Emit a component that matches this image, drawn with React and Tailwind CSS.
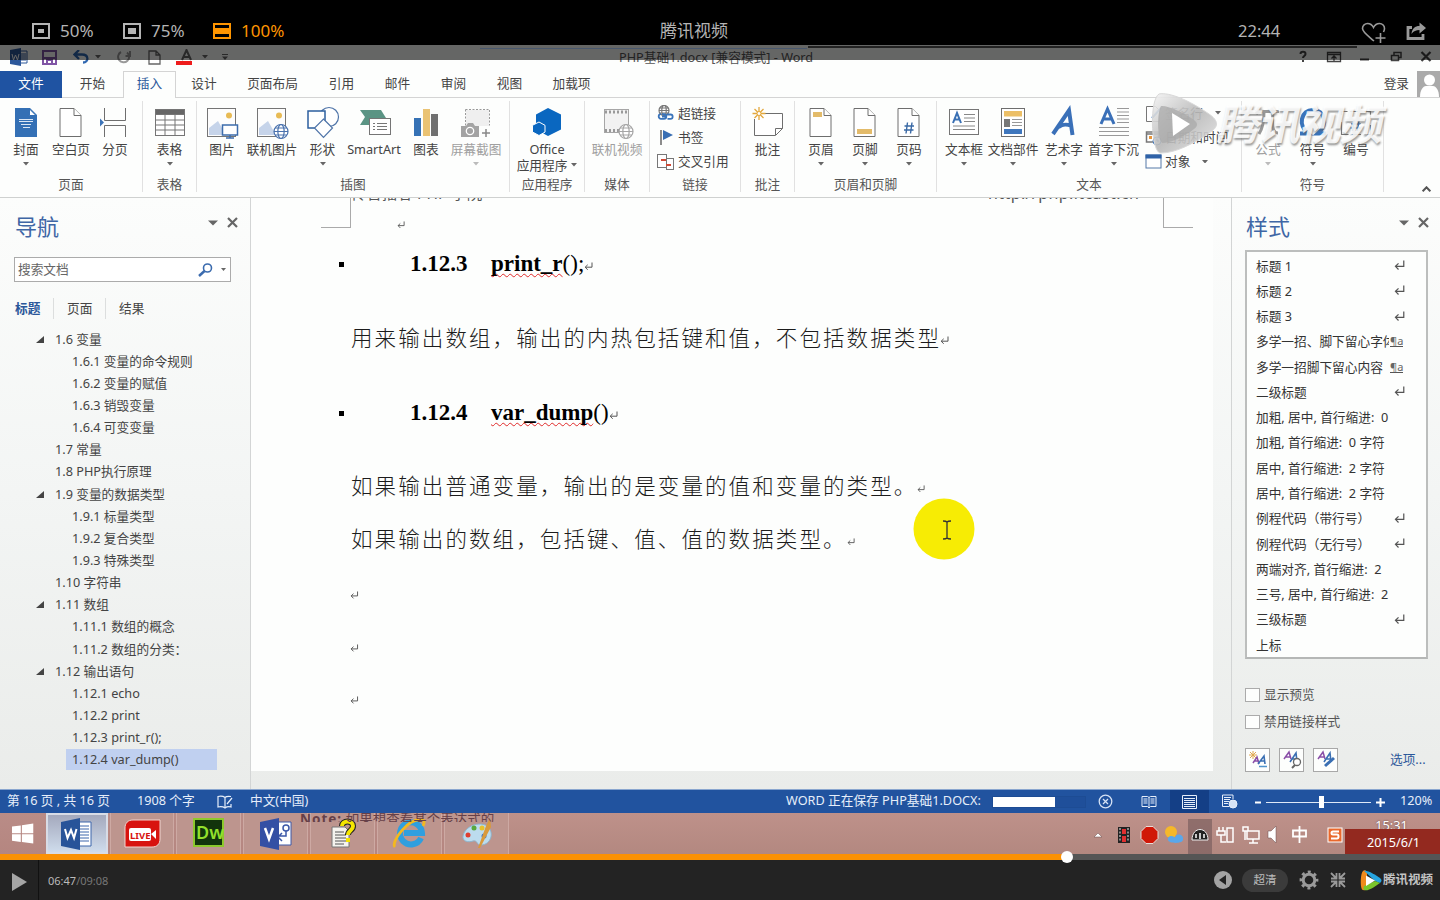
import React from "react";

const SANS = "font-['Noto_Sans','Noto_Sans_CJK_SC',sans-serif]";

function Caret({ className = "", color = "#666", w = 6 }) {
  return (
    <svg className={"shrink-0 " + className} width={w} height={w / 2 + 0.5} viewBox="0 0 6 3.5">
      <path d="M0 0h6L3 3.5z" fill={color} />
    </svg>
  );
}

function Ret({ className = "", size = 9, color = "#555" }) {
  return (
    <svg className={"shrink-0 " + className} width={size} height={size} viewBox="0 0 9 9" fill="none" stroke={color} strokeWidth="1">
      <path d="M8 .5v4.7H1.2M3.7 2.8 1.2 5.2l2.5 2.6" />
    </svg>
  );
}

/* ---------- ribbon icons, 32x32 ---------- */
const Page = ({ children, x = 5, fill = "#fff", stroke = "#6e6e6e" }) => (
  <>
    <path d={`M${x} 1.5h14l7 7v21h-21z`} fill={fill} stroke={stroke} />
    <path d={`M${x + 14} 1.5v7h7`} fill="#fff" stroke={stroke} />
    {children}
  </>
);
const Globe = ({ cx, cy, r = 7, c = "#4a72ae" }) => (
  <g fill="#fff" stroke={c} strokeWidth="1.2">
    <circle cx={cx} cy={cy} r={r} />
    <ellipse cx={cx} cy={cy} rx={r * 0.45} ry={r} fill="none" />
    <path d={`M${cx - r} ${cy}h${2 * r}M${cx - r * 0.85} ${cy - r * 0.5}h${1.7 * r}M${cx - r * 0.85} ${cy + r * 0.5}h${1.7 * r}`} />
  </g>
);
const Photo = () => (
  <>
    <rect x="1.5" y="1.5" width="28" height="28" fill="#fdfdfd" stroke="#757575" />
    <path d="M3 28V21l9-7 8 14z" fill="#c6d4ea" />
    <circle cx="23" cy="8.500" r="3" fill="#e8bb55" />
  </>
);

const ICONS = {
  cover: (
    <>
      <path d="M5 1h15l7 7v22H5z" fill="#3470b5" />
      <path d="M19.500 2v6.500H26z" fill="#fff" stroke="#3470b5" />
      <path d="M9 12.500h14M9 14.500h14M11 17.500h10M13 20.500h7" stroke="#dbe7f5" />
    </>
  ),
  blank: <Page />,
  pbreak: (
    <g fill="none" stroke="#6e6e6e">
      <path d="M5.500 1v12.500h21V1M5.500 30V18.500h21V30" />
      <path d="M1 11.500v8l4-4z" fill="#3c74b8" stroke="none" />
    </g>
  ),
  table: (
    <g stroke="#757575" fill="#fff">
      <rect x="1.500" y="2.500" width="29" height="26" />
      <rect x="1.500" y="2.500" width="29" height="5" fill="#666" />
      <path d="M1.500 13h29M1.500 18h29M1.500 23h29M11 7v21M21 7v21" />
    </g>
  ),
  photo: (
    <>
      <Photo />
      <path d="M16.500 18h15v10h-15z" fill="#fff" stroke="#3d6cac" strokeWidth="1.500" />
      <path d="M24 28v3M20 31h8" stroke="#3d6cac" strokeWidth="1.500" />
    </>
  ),
  online: (
    <>
      <Photo />
      <Globe cx={25} cy={24.500} />
    </>
  ),
  shapes: (
    <g fill="#fff" stroke="#4f74a8" strokeWidth="1.200">
      <circle cx="22" cy="10" r="9.500" />
      <rect x="1" y="4" width="17" height="17" stroke="#2c5f9e" strokeWidth="1.500" />
      <path d="m16.500 12 9 9-9 9.500-9-9.500z" />
    </g>
  ),
  smart: (
    <>
      <path d="M2 3h21l5 8-4 7H2l5-8z" fill="#5b9484" />
      <rect x="11.500" y="11.500" width="21" height="16" fill="#fff" stroke="#757575" />
      <path d="M15 16.500h2M15 19.500h2M15 22.500h2M19 16.500h10M19 19.500h10M19 22.500h10" stroke="#777" />
    </>
  ),
  chart: (
    <>
      <rect x="4" y="11" width="7" height="18" fill="#3672b5" />
      <rect x="13" y="2" width="7" height="27" fill="#eac374" />
      <rect x="21" y="7" width="7" height="22" fill="#707070" />
    </>
  ),
  shot: (
    <>
      <path d="M5.500 2.500h24v16M5.500 2.500v16" fill="none" stroke="#999" strokeDasharray="2 1.500" />
      <rect x="6" y="3" width="23" height="16" fill="#efefef" />
      <path d="M1 19h5l2-3h5l2 3h4v11H1z" fill="#a3a3a3" />
      <circle cx="10" cy="24" r="3.700" fill="#a3a3a3" stroke="#fff" strokeWidth="1.300" />
      <path d="M26 22v8M22 26h8" stroke="#888" strokeWidth="1.500" />
    </>
  ),
  office: (
    <>
      <path d="m17 1 13 6.500v15L17 29 5 22.500v-15z" fill="#0a67c0" />
      <path d="m8 15 6 3.300v6.800L8 28.500 1.500 25v-6.700z" fill="#0a67c0" stroke="#fff" />
    </>
  ),
  video: (
    <>
      <rect x="3.500" y="2.500" width="24" height="23" fill="#f2f2f2" stroke="#a6a6a6" />
      <path d="M4 5h24M4 23.500h14" stroke="#999" strokeWidth="3" strokeDasharray="2 2" />
      <Globe cx={25} cy={24.500} c="#a6a6a6" />
    </>
  ),
  comment: (
    <>
      <path d="M9 6.500h21.500v15l-7 7H2.500V12" fill="#fff" stroke="#6e6e6e" />
      <path d="M23.500 28v-6.500h7" fill="none" stroke="#6e6e6e" />
      <path d="M7 0v13M.5 6.500h13M2.500 2l9 9M11.500 2l-9 9" stroke="#e3a83d" strokeWidth="1.300" />
      <circle cx="7" cy="6.500" r="2" fill="#fff" stroke="#e3a83d" />
    </>
  ),
  header: (
    <Page>
      <rect x="8" y="5" width="9" height="5" fill="#e3bb6a" />
    </Page>
  ),
  footer: (
    <Page>
      <rect x="8" y="22" width="15" height="5" fill="#e3bb6a" />
    </Page>
  ),
  pnum: (
    <Page>
      <path d="M14.500 15.500 13 26.500M19 15.500l-1.500 11M11.500 19h9.500M11 23h9.500" stroke="#3a69a5" strokeWidth="1.400" />
    </Page>
  ),
  textbox: (
    <>
      <rect x="1.500" y="2.500" width="29" height="25" fill="#fff" stroke="#757575" />
      <path d="m5 16 4-10 4 10M6.500 12.500h5" fill="none" stroke="#3a70b4" strokeWidth="2" />
      <path d="M16 7.500h11M16 11h11M16 14.500h11M5 19h22M5 22.500h22" stroke="#888" />
    </>
  ),
  parts: (
    <>
      <rect x="4.500" y="1.500" width="23" height="28" fill="#fff" stroke="#6e6e6e" />
      <rect x="7" y="4" width="18" height="5.500" fill="#ecbf66" />
      <rect x="7" y="12" width="6" height="8" fill="#777" />
      <path d="M15 12.500h10M15 15.500h10M15 18.500h10" stroke="#999" />
      <rect x="7" y="22" width="18" height="5" fill="#3f77bd" />
    </>
  ),
  wordart: (
    <path d="m5 27 16-23.500L24.500 28M10.500 20c5-3 8-3 13-1" fill="none" stroke="#3a70b8" strokeWidth="4" />
  ),
  dropcap: (
    <>
      <path d="m3 17 6.500-15L16 17M5.500 12h8" fill="none" stroke="#3a70b8" strokeWidth="3" />
      <path d="M19 1.500h12M19 5h12M19 8.500h12M19 12h12M19 15.500h12M1 20.500h30M1 24.500h30M1 28.500h30" stroke="#999" />
    </>
  ),
  pi: (
    <path d="M4 7c2-3 5-3 8-2.500h15M12 5c0 10-1 16-5 22M21 5c-1 12-1 21 5 21" fill="none" stroke="#999" strokeWidth="3" />
  ),
  omega: (
    <path d="M3 26.500h8C6 22 4 17 5 12 6.500 5 11 3 16 3s9.500 2 11 9c1 5-1 10-6 14.500h8" fill="none" stroke="#3a74bb" strokeWidth="4" />
  ),
  num: (
    <>
      <path d="M1.500 8V4.500h6M10 4.500h8M24 4.500h6.500V12M1.500 15v12.500h7M30.500 18v9.500h-6M12 27.500h9" fill="none" stroke="#777" strokeWidth="1.200" />
      <path d="M14 13.500 12.500 24M19 13.500 17.500 24M11 17h10M10.500 21h10" stroke="#3a69a5" strokeWidth="1.400" />
    </>
  ),
};

function Big({ w, icon, label, label2, caret, dim }) {
  return (
    <div className={"flex shrink-0 flex-col items-center " + w}>
      <svg className="mt-[6px] shrink-0 overflow-visible" width="32" height="32" viewBox="0 0 32 32">
        {ICONS[icon]}
      </svg>
      <div className={"mt-[2px] h-[16px] whitespace-nowrap leading-[16px] " + (dim ? "text-[#a0a0a0]" : "text-[#444]")}>{label}</div>
      {label2 ? (
        <div className="flex h-[16px] items-center gap-1 whitespace-nowrap leading-[16px]">
          {label2}
          <Caret />
        </div>
      ) : (
        caret && <Caret className="mt-[5px]" color={dim ? "#bbb" : "#666"} />
      )}
    </div>
  );
}

function Group({ w, title, children, pl = "" }) {
  return (
    <div className={"flex h-[91px] shrink-0 flex-col border-r border-[#e1e1e1] " + w}>
      <div className={"flex h-[76px] " + pl}>{children}</div>
      <div className="h-[16px] whitespace-nowrap text-center leading-[16px] text-[#555]">{title}</div>
    </div>
  );
}

function Line({ icon, label, caret, gap = "gap-1" }) {
  return (
    <div className={"flex h-[24.300px] items-center " + gap}>
      <svg className="shrink-0" width="17" height="17" viewBox="0 0 17 17">{icon}</svg>
      <span className="whitespace-nowrap">{label}</span>
      {caret && <Caret className="ml-[9px]" />}
    </div>
  );
}

function Watermark() {
  return (
    <div className="pointer-events-none absolute left-[1147px] top-[92px] flex h-[64px] w-[260px] items-center">
      <svg width="78" height="64" viewBox="0 0 78 64" className="shrink-0">
        <defs>
          <linearGradient id="wm" x1="0" y1="0" x2="1" y2="1">
            <stop offset="0" stopColor="#f4f4f4" stopOpacity=".9" />
            <stop offset=".5" stopColor="#b8b8b8" stopOpacity=".9" />
            <stop offset="1" stopColor="#e2e2e2" stopOpacity=".85" />
          </linearGradient>
        </defs>
        <path d="M12 2c10-2 30 6 50 20 10 7 10 13 0 19-16 11-34 20-48 20C4 62 2 8 12 2z" fill="url(#wm)" stroke="#d8d8d8" />
        <path d="M14 14c6-1 22 6 33 14 4 3 4 6 0 9-10 8-24 14-32 14-5-7-5-30-1-37z" fill="#a9a9a9" fillOpacity=".75" />
        <path d="M25 21l18 11-17 12z" fill="#fff" />
      </svg>
      <span className="-ml-[5px] -skew-x-[12deg] whitespace-nowrap text-[42px] font-bold leading-[60px] tracking-[-1px] text-white/85 [text-shadow:1px_2px_2px_rgba(90,90,90,0.6)]">腾讯视频</span>
    </div>
  );
}

const TABS = [
  ["开始", "w-[61px]"], ["插入", "w-[53px]"], ["设计", "w-[56px]"], ["页面布局", "w-[81px]"], ["引用", "w-[57px]"],
  ["邮件", "w-[55px]"], ["审阅", "w-[57px]"], ["视图", "w-[55px]"], ["加载项", "w-[69px]"],
];

const NAV = [
  [1, "1.6 变量", 1], [2, "1.6.1 变量的命令规则"], [2, "1.6.2 变量的赋值"], [2, "1.6.3 销毁变量"], [2, "1.6.4 可变变量"],
  [1, "1.7 常量"], [1, "1.8 PHP执行原理"], [1, "1.9 变量的数据类型", 1], [2, "1.9.1 标量类型"], [2, "1.9.2 复合类型"],
  [2, "1.9.3 特殊类型"], [1, "1.10 字符串"], [1, "1.11 数组", 1], [2, "1.11.1 数组的概念"], [2, "1.11.2 数组的分类："],
  [1, "1.12 输出语句", 1], [2, "1.12.1 echo"], [2, "1.12.2 print"], [2, "1.12.3 print_r();"], [2, "1.12.4 var_dump()", 0, 1],
];

const STYLES = [
  ["标题 1", "r"], ["标题 2", "r"], ["标题 3", "r"], ["多学一招、脚下留心字体", "a"], ["多学一招脚下留心内容", "a"], ["二级标题", "r"],
  ["加粗, 居中, 首行缩进:  0 字符"], ["加粗, 首行缩进:  0 字符"], ["居中, 首行缩进:  2 字符"], ["居中, 首行缩进:  2 字符"],
  ["例程代码（带行号）", "r"], ["例程代码（无行号）", "r"], ["两端对齐, 首行缩进:  2"], ["三号, 居中, 首行缩进:  2"], ["三级标题", "r"], ["上标"],
];

function PaneTools({ className }) {
  return (
    <div className={"flex items-center gap-[9px] " + className}>
      <svg width="10" height="6" viewBox="0 0 10 6"><path d="M0 .5h10L5 5.500z" fill="#666" /></svg>
      <svg width="11" height="11" viewBox="0 0 11 11"><path d="m1 1 9 9M10 1l-9 9" stroke="#666" strokeWidth="2.200" /></svg>
    </div>
  );
}

function TopBar() {
  return (
    <header className="flex h-[45px] shrink-0 bg-black pt-[17px] text-[17px] leading-[28px] text-[#b4b4b4]">
      <div className="flex w-[660px] items-center pl-[32px]">
        <svg width="18" height="16" viewBox="0 0 18 16"><path d="M1 1h16v14H1z" fill="none" stroke="#b4b4b4" strokeWidth="2" /><path d="M6 6h6v4H6z" fill="#b4b4b4" /></svg>
        <span className="ml-[10px] w-[63px]">50%</span>
        <svg width="18" height="16" viewBox="0 0 18 16"><path d="M1 1h16v14H1z" fill="none" stroke="#b4b4b4" strokeWidth="2" /><path d="M5 5h8v6H5z" fill="#b4b4b4" /></svg>
        <span className="ml-[10px] w-[62px]">75%</span>
        <svg width="18" height="16" viewBox="0 0 18 16"><path d="M0 0h18v16H0z" fill="#ff9500" /><path d="M2 2h14v3H2zM2 11h14v3H2z" fill="#000" /></svg>
        <span className="ml-[10px] text-[#ff9500]">100%</span>
      </div>
      <span className="w-[578px]">腾讯视频</span>
      <span className="w-[123px] text-[16.500px]">22:44</span>
      <svg className="mt-[5px]" width="26" height="22" viewBox="0 0 26 22" fill="none" stroke="#999" strokeWidth="1.600">
        <path d="M13 19C6 13 1.500 10 1.500 6.500 1.500 3.500 4 1.500 6.500 1.500c3 0 5 2 6 4 1-2 3-4 6-4 3 0 5 2.500 5 5 0 1.500-.5 2.500-1 3.500M19.500 11v10M14.500 16h10" />
      </svg>
      <svg className="ml-[19px] mt-[5px]" width="21" height="19" viewBox="0 0 21 19">
        <path d="M6 5.500H2v11h15V12" fill="none" stroke="#999" strokeWidth="2.800" />
        <path d="M5.500 12C6 6.500 9 4 13.500 4V.5L20 6l-6.500 5.500V8C10 8 7.500 9 5.500 12z" fill="#999" />
      </svg>
    </header>
  );
}

function TitleBar() {
  return (
    <div className="relative flex h-[26px] shrink-0 bg-[#fdfefd]">
      <div className="flex h-[24px] w-[618px] items-center pl-[10px]">
        <svg width="18" height="18" viewBox="0 0 18 18">
          <path d="M9 3h8v12H9z" fill="#fff" stroke="#2b579a" /><path d="M11 6h5M11 8h5M11 10h5M11 12h5" stroke="#2b579a" />
          <path d="M0 2 11 0v18L0 16z" fill="#2b579a" /><path d="m2 6 1.500 6L5.500 7l2 5L9 6" fill="none" stroke="#fff" />
        </svg>
        <svg className="ml-[14px]" width="15" height="15" viewBox="0 0 15 15"><path d="M1 1h13v13H1z" fill="#fff" stroke="#8055a5" strokeWidth="2" /><path d="M1 8h13M5 14v-4h5v4" stroke="#8055a5" strokeWidth="2" fill="none" /></svg>
        <svg className="ml-[16px]" width="16" height="14" viewBox="0 0 16 14"><path d="M6 0 1.500 4.500 6 9M2 4.500h7c7 0 7 8 1 8" fill="none" stroke="#2f67b0" strokeWidth="2.300" /></svg>
        <Caret className="ml-[6px]" />
        <svg className="ml-[16px]" width="14" height="14" viewBox="0 0 14 14"><path d="M10 2.500A5.500 5.500 0 1 1 4 2M13 1v5H8.500" fill="none" stroke="#999" strokeWidth="2" /></svg>
        <svg className="ml-[17px]" width="13" height="15" viewBox="0 0 13 15"><path d="M1 1h7l4 4v9H1zM8 1v4h4" fill="#fff" stroke="#666" strokeWidth="1.300" /></svg>
        <svg className="ml-[17px]" width="17" height="17" viewBox="0 0 17 17"><path d="m4 11 4.500-10L13 11M5.500 8h6" fill="none" stroke="#666" strokeWidth="2" /></svg>
        <Caret className="ml-[7px]" />
        <svg className="ml-[14px]" width="6" height="6" viewBox="0 0 6 6"><path d="M0 .5h6" stroke="#666" /><path d="M0 2.500h6L3 6z" fill="#666" /></svg>
      </div>
      <div className="h-[24px] w-[679px] whitespace-nowrap pl-px text-[12.700px] leading-[24px] text-[#555]">PHP基础1.docx [兼容模式] - Word</div>
      <svg width="143" height="24" viewBox="0 0 143 24" fill="none" stroke="#444" strokeWidth="1.300">
        <path d="M3.500 9c0-3 5-3 5 0 0 2-2.500 2-2.500 4M6 15v2" strokeWidth="2" />
        <path d="M30.500 7.500h13v9h-13zM30.500 9.500h13M37 16v-5m-2.500 2.500L37 11l2.500 2.500" />
        <path d="M63 14.500h9" strokeWidth="2" />
        <path d="M94.500 10.500h7v5h-7zM97 10V7.500h7v5h-2" strokeWidth="1.500" />
        <path d="m124.500 7 9 9M133.500 7l-9 9" strokeWidth="2.200" />
      </svg>
      <div className="absolute inset-x-0 top-0 h-[15px] bg-black/60" />
      <div className="absolute left-[480px] top-[3px] h-px w-[327px] bg-[#49586e]" />
      <div className="absolute left-[808px] top-px h-[2px] w-[549px] bg-[#222]" />
      <svg className="absolute left-[176px] top-[16px]" width="16" height="4"><path d="M0 0h16v4H0z" fill="#ee1c1c" /></svg>
    </div>
  );
}

function Ribbon() {
  return (
    <>
      <div className="flex h-[27px] shrink-0 items-stretch bg-[#fdfefd] text-[12.700px] leading-[24px] text-[#444]">
        <div className="w-[62px] bg-[#1f53a2] text-center text-white">文件</div>
        {TABS.map(([t, w]) => (
          <div key={t} className={w + " text-center " + (t === "插入" ? "border border-b-0 border-[#d4d4d4] leading-[23px] text-[#2b579a]" : "border-b border-[#d4d4d4]")}>{t}</div>
        ))}
        <div className="flex flex-1 justify-end border-b border-[#d4d4d4]">
          <span className="mr-[8px]">登录</span>
          <svg width="23" height="26" viewBox="0 0 23 26"><path d="M0 0h23v26H0z" fill="#aaa" /><circle cx="12.500" cy="9" r="5.500" fill="#fff" /><path d="M3 26c0-7 3-11 6-11h7c3 0 6 4 6 11z" fill="#fff" /></svg>
        </div>
      </div>
      <div className="flex h-[100px] shrink-0 border-b border-[#cfd1d0] bg-[#fdfefd] pt-[3px] text-[12.700px] text-[#444]">
        <Group w="w-[143px]" title="页面">
          <Big w="w-[52px]" icon="cover" label="封面" caret />
          <Big w="w-[38px]" icon="blank" label="空白页" />
          <Big w="w-[50px]" icon="pbreak" label="分页" />
        </Group>
        <Group w="w-[54px]" title="表格"><Big w="w-[53px]" icon="table" label="表格" caret /></Group>
        <Group w="w-[313px]" title="插图">
          <Big w="w-[50px]" icon="photo" label="图片" />
          <Big w="w-[50px]" icon="online" label="联机图片" />
          <Big w="w-[51px]" icon="shapes" label="形状" caret />
          <Big w="w-[52px]" icon="smart" label="SmartArt" />
          <Big w="w-[52px]" icon="chart" label="图表" />
          <Big w="w-[48px]" icon="shot" label="屏幕截图" caret dim />
        </Group>
        <Group w="w-[75px]" title="应用程序"><Big w="w-[74px]" icon="office" label="Office" label2="应用程序" /></Group>
        <Group w="w-[65px]" title="媒体"><Big w="w-[64px]" icon="video" label="联机视频" dim /></Group>
        <Group w="w-[91px]" title="链接" pl="pl-[7px]">
          <div className="flex flex-col">
            <Line label="超链接" icon={<><Globe cx={7} cy={5.500} r={5} c="#777" /><path d="M5 11.500h4m-4-2.300h2a2.300 2.300 0 0 1 0 4.600H4a2.300 2.300 0 0 1 0-4.600M10 9.500h3.500a2 2 0 0 1 0 4.300H10.500" fill="none" stroke="#3a74bb" strokeWidth="1.800" /></>} />
            <Line label="书签" icon={<><path d="M4 1v15" stroke="#666" strokeWidth="1.500" /><path d="m6 1 10 5L6 11z" fill="#3a6fb3" /></>} />
            <Line label="交叉引用" icon={<g fill="#fff" stroke="#777"><rect x=".5" y="1.500" width="9" height="13" /><rect x="9.500" y="5.500" width="7" height="11" /><path d="M4 7h5M9 12h5" stroke="#d14a35" strokeWidth="2" /></g>} />
          </div>
        </Group>
        <Group w="w-[54px]" title="批注"><Big w="w-[53px]" icon="comment" label="批注" /></Group>
        <Group w="w-[142px]" title="页眉和页脚" pl="pl-[4px]">
          <Big w="w-[44px]" icon="header" label="页眉" caret />
          <Big w="w-[44px]" icon="footer" label="页脚" caret />
          <Big w="w-[44px]" icon="pnum" label="页码" caret />
        </Group>
        <Group w="w-[305px]" title="文本" pl="pl-[3px]">
          <Big w="w-[48px]" icon="textbox" label="文本框" caret />
          <Big w="w-[50px]" icon="parts" label="文档部件" caret />
          <Big w="w-[52px]" icon="wordart" label="艺术字" caret />
          <Big w="w-[47px]" icon="dropcap" label="首字下沉" caret />
          <div className="flex flex-col pl-[8px]">
            <Line gap="gap-[3px]" label="签名行" caret icon={<><path d="M1.500 1.500h9l4 4v11h-13z" fill="#fff" stroke="#777" /><path d="m7 13 9-10" stroke="#3a74bb" strokeWidth="2" /></>} />
            <Line gap="gap-[3px]" label="日期和时间" icon={<><path d="M1.500 3h12v10h-12zM2 5h12" fill="#fff" stroke="#777" strokeWidth="1.500" /><path d="M4 7h3v3H4z" fill="#e8963a" /><circle cx="12" cy="12" r="4" fill="#fff" stroke="#3a74bb" /><path d="M12 9.500V12h2" fill="none" stroke="#3a74bb" /></>} />
            <Line gap="gap-[3px]" label="对象" caret icon={<><rect x="1" y="2" width="15" height="13" fill="#fff" stroke="#5578a8" /><path d="M.5 1.500h16v4H.5z" fill="#2f62a8" /></>} />
          </div>
        </Group>
        <Group w="w-[142px]" title="符号" pl="pl-[4px]">
          <Big w="w-[44px]" icon="pi" label="公式" caret dim />
          <Big w="w-[45px]" icon="omega" label="符号" caret />
          <Big w="w-[42px]" icon="num" label="编号" />
        </Group>
        <div className="flex flex-1 items-end justify-end pb-[5px] pr-[9px]">
          <svg width="9" height="6" viewBox="0 0 9 6"><path d="m.7 5.300 3.800-4 3.800 4" fill="none" stroke="#555" strokeWidth="2" /></svg>
        </div>
      </div>
    </>
  );
}

function NavPane() {
  return (
    <aside className="flex w-[251px] shrink-0 flex-col border-r border-[#d3d5d5] text-[12.700px] text-[#444]">
      <div className="flex h-[56px] justify-between pl-[15px] pr-[12px]">
        <h2 className="text-[22px] leading-[56px] text-[#3f66a5]">导航</h2>
        <PaneTools className="mb-[7px]" />
      </div>
      <div className="ml-[14px] mt-[3px] flex h-[25px] w-[217px] items-center border border-[#ababab] bg-white pl-[3px] pr-[4px]">
        <span className="flex-1 text-[#666]">搜索文档</span>
        <svg width="15" height="14" viewBox="0 0 15 14" fill="none" stroke="#3b6bae"><circle cx="9.500" cy="5" r="4" strokeWidth="1.600" /><path d="M6.500 8 1 13" strokeWidth="2.500" /></svg>
        <Caret className="ml-[8px]" w={5} />
      </div>
      <div className="ml-[15px] mt-[16px] flex h-[21px] leading-[21px]">
        <span className="w-[39px] border-r border-[#dcdede] font-bold text-[#2b579a]">标题</span>
        <span className="w-[52px] border-r border-[#dcdede] pl-[13px]">页面</span>
        <span className="pl-[13px]">结果</span>
      </div>
      <div className="mt-[9px] flex flex-col">
        {NAV.map(([lv, t, open, sel]) => (
          <div key={t} className="flex h-[22.150px] items-center">
            <span className={"flex justify-end " + (lv === 1 ? "w-[55px] pr-[11px]" : "w-[66px]")}>
              {open ? <svg width="8" height="7" viewBox="0 0 8 7"><path d="M8 0v7H0z" fill="#444" /></svg> : null}
            </span>
            <span className={"h-[21px] whitespace-nowrap leading-[21px] " + (lv === 1 ? "" : "w-[151px] pl-[6px] ") + (sel ? "bg-[#c0d0f0]" : "")}>{t}</span>
          </div>
        ))}
      </div>
    </aside>
  );
}

const BODY = "text-[21.500px] font-light tracking-[2.100px] text-[#1c1c1c]";

function Heading({ num, word, paren }) {
  return (
    <div className="flex h-[30px] items-center font-['Liberation_Serif',serif] text-[23px] leading-[30px] text-black">
      <span className="ml-[88px] h-[5px] w-[5px] bg-black" />
      <span className="ml-[66px] w-[81px] font-bold">{num}</span>
      <span className="font-bold underline decoration-[#e02a2a] decoration-wavy decoration-[1px] underline-offset-[2px] [text-decoration-skip-ink:none]">{word}</span>
      <span>{paren}</span>
      <Ret className="mt-[4px]" />
    </div>
  );
}

function Document() {
  return (
    <main className="relative flex w-[980px] shrink-0 flex-col">
      <div className="mr-[18px] flex h-[573px] flex-col bg-[#fdfefd]">
        <div className="flex h-[31px] shrink-0 overflow-hidden text-[16px] text-[#555]">
          <div className="h-[30px] w-[30px] ml-[70px] border-b border-r border-[#aaa]" />
          <div className="flex w-[637px] flex-col">
            <span className="-mt-[15px] h-[20px] whitespace-nowrap text-[15.500px] leading-[20px]">传智播客 PHP 学院</span>
            <Ret className="ml-[46px] mt-[18px]" size={8} />
          </div>
          <span className="-mt-[16px] w-[175px] whitespace-nowrap leading-[22px] tracking-[.4px]">http://php.itcast.cn</span>
          <div className="h-[30px] w-[30px] border-b border-l border-[#aaa]" />
        </div>
        <div className="mt-[20px]"><Heading num="1.12.3" word="print_r" paren="();" /></div>
        <div className={"ml-[100px] mt-[43px] flex h-[32px] items-center whitespace-nowrap leading-[32px] " + BODY}>用来输出数组，输出的内热包括键和值，不包括数据类型<Ret className="-ml-[1px] mt-[5px]" /></div>
        <div className="mt-[44px]"><Heading num="1.12.4" word="var_dump" paren="()" /></div>
        <div className={"ml-[100px] mt-[42px] flex h-[32px] items-center whitespace-nowrap leading-[32px] " + BODY}>如果输出普通变量，输出的是变量的值和变量的类型。<Ret className="mt-[5px]" size={8} /></div>
        <div className={"ml-[100px] mt-[21px] flex h-[32px] items-center whitespace-nowrap leading-[32px] " + BODY}>如果输出的数组，包括键、值、值的数据类型。<Ret className="mt-[5px]" size={8} /></div>
        <div className="ml-[99px] mt-[36px] flex flex-col gap-[44px]">
          <Ret size={8.500} /><Ret size={8.500} /><Ret size={8.500} />
        </div>
      </div>
      <svg className="absolute left-[662px] top-[300px]" width="62" height="62" viewBox="0 0 62 62">
        <circle cx="31" cy="31" r="30.500" fill="#f7ec04" />
        <path d="M30 23c2 0 3 0 4 1 1-1 2-1 4-1M34 24v16M30 41c2 0 3 0 4-1 1 1 2 1 4 1" fill="none" stroke="#333" strokeWidth="1.300" />
      </svg>
    </main>
  );
}

function StylesPane() {
  return (
    <aside className="flex flex-1 flex-col border-l border-[#d3d5d5] text-[12.700px] text-[#333]">
      <div className="flex h-[52px] justify-between pl-[14px] pr-[11px]">
        <h2 className="text-[22px] leading-[56px] text-[#3f66a5]">样式</h2>
        <PaneTools className="mb-[3px]" />
      </div>
      <div className="ml-[13px] h-[409px] w-[183px] border-2 border-[#bcbebd] border-b-[#b5b7b6] bg-[#fdfefd] pt-px">
        {STYLES.map(([t, m], i) => (
          <div key={i} className="flex h-[25.270px] items-center pl-[9px]">
            <span className="w-[133px] shrink-0 overflow-hidden whitespace-pre leading-[22px]">{t}</span>
            {m === "r" && <Ret className="ml-[5px]" size={11} />}
            {m === "a" && <span className="ml-[1px] border-b border-[#555] text-[11px] leading-[11px] text-[#666]">¶a</span>}
          </div>
        ))}
      </div>
      <div className="ml-[13px] mt-[25px] flex flex-col gap-[5px]">
        {["显示预览", "禁用链接样式"].map((t) => (
          <label key={t} className="flex h-[22px] items-center gap-[4px] text-[#555]">
            <span className="h-[14px] w-[15px] border border-[#ababab] bg-[#fdfefd]" />
            {t}
          </label>
        ))}
      </div>
      <div className="ml-[13px] mt-[15px] flex h-[24px] items-center gap-[9px]">
        {[0, 1, 2].map((k) => (
          <svg key={k} width="25" height="24" viewBox="0 0 25 24" fill="none">
            <rect x=".5" y=".5" width="24" height="23" fill="#fdfefd" stroke="#a8a8a8" />
            <path d={k ? "m5 11 5-7 2 7M7 9h4" : "m8 15 4-6 2 7M9 13h5"} stroke="#8a4fa8" strokeWidth="1.500" />
            <path d={k ? "m11 14 6-9 1 9M13 11h5" : "m13 16 6-8 1 8M15 13h5"} stroke="#3a6fb3" strokeWidth="1.600" />
            {k === 0 && <><path d="M8 3v8M4 7h8M5 4l6 6M11 4l-6 6" stroke="#e0a850" /><path d="M14 18.500h8" stroke="#4f93cc" strokeWidth="1.500" /></>}
            {k === 1 && <><circle cx="18" cy="14" r="3.500" fill="#fff" stroke="#666" strokeWidth="1.300" /><path d="m16 17-3 3" stroke="#666" strokeWidth="2" /></>}
            {k === 2 && <path d="m12 18 9-8" stroke="#3a6fb3" strokeWidth="3" />}
          </svg>
        ))}
        <span className="ml-[43px] whitespace-nowrap text-[#2b579a]">选项...</span>
      </div>
    </aside>
  );
}

function StatusBar() {
  return (
    <div className="flex h-[24px] shrink-0 items-center whitespace-nowrap border-t border-[#8aa6cf] bg-[#21539f] text-[12.700px] leading-[21px] text-[#e6eefa]">
      <span className="w-[137px] pb-[2px] pl-[7px]">第 16 页 , 共 16 页</span>
      <span className="w-[80px] pb-[2px]">1908 个字</span>
      <svg width="17" height="14" viewBox="0 0 17 14" fill="none" stroke="#e6eefa" strokeWidth="1.200"><path d="M8 2.500C6 1 3 1 1 1.500V12c2-.5 5-.5 7 1 2-1.500 4-1.500 6-1V9M8 2.500V12M8 2.500C9 1.500 11 1 14 1.500M15 3l-5 6" /></svg>
      <span className="ml-[16px] w-[536px] pb-[2px]">中文(中国)</span>
      <span className="w-[206px] pb-[2px]">WORD 正在保存 PHP基础1.DOCX:</span>
      <div className="h-[12px] w-[94px] border border-[#1d4c94] bg-[#1f4f9a]"><div className="h-[10px] w-[62px] bg-white" /></div>
      <svg className="ml-[12px]" width="15" height="15" viewBox="0 0 15 15" fill="none" stroke="#d5e2f5" strokeWidth="1.300"><circle cx="7.500" cy="7.500" r="6.300" /><path d="m5 5 5 5M10 5l-5 5" /></svg>
      <svg className="ml-[28px]" width="16" height="14" viewBox="0 0 16 14" fill="none" stroke="#e6eefa"><path d="M1 1.500h5.500L8 2.500l1.500-1H15v10H9.500L8 13l-1.500-1.500H1zM8 2.500V13M2.500 4h4M2.500 6h4M2.500 8h4M9.500 4h4M9.500 6h4M9.500 8h4" /></svg>
      <div className="ml-[13px] flex h-[23px] w-[39px] items-center justify-center bg-[#143f86]">
        <svg width="15" height="14" viewBox="0 0 15 14" fill="none" stroke="#e6eefa"><path d="M.5.500h14v13H.5zM2 3.500h11M2 5.500h11M2 7.500h11M2 9.500h11M2 11.500h11" /></svg>
      </div>
      <svg className="ml-[13px]" width="16" height="15" viewBox="0 0 16 15" fill="none" stroke="#e6eefa"><path d="M11 5V1H.5v11.500H7M2 3.500h7M2 5.500h6M2 7.500h5M2 9.500h4" /><circle cx="11" cy="10" r="4" fill="#d5e2f5" /></svg>
      <svg className="ml-[16px]" width="131" height="14" viewBox="0 0 131 14"><path d="M1 7.500h6M122 7.500h9M126.500 3v9" stroke="#fff" strokeWidth="2" /><path d="M12 7.500h105" stroke="#dfe9f7" /><path d="M65 1h5v12h-5z" fill="#fff" /></svg>
      <span className="ml-[15px] pb-[2px]">120%</span>
    </div>
  );
}

const SLOTS = [
  { w: "w-[62px] border-2 border-[#d8dce6] bg-gradient-to-b from-[#a4a9bd] to-[#cfdcec]", i: <><path d="M17 4h13v24H17z" fill="#fff" stroke="#3c66ac" /><path d="M19 8h9M19 11h9M19 14h9M19 17h9M19 20h9M19 23h9" stroke="#3c66ac" /><path d="M0 4 19 0v32L0 28z" fill="#285499" /><path d="m4 11 2.500 9L10 12l3 8 2.500-9" fill="none" stroke="#fff" strokeWidth="2" /></> },
  { w: "w-[64px]", i: <><path d="M7 2h27v19c0 5-3 8-8 8H-1V10c0-5 3-8 8-8z" fill="#d8130f" stroke="#f2d5d0" /><rect x="3" y="10" width="22" height="13" rx="2" fill="#fff" /><path d="m25 16 5-4v9z" fill="#fff" /><text x="4" y="20.500" fontSize="9.500" fontWeight="700" fill="#d8130f" fontFamily="Noto Sans">LIVE</text></> },
  { w: "w-[65px]", i: <><rect x="1" y="1" width="29" height="27" fill="#12340c" stroke="#8cc92c" strokeWidth="2" /><text x="3" y="21" fontSize="18" fontWeight="600" fill="#92e02c" fontFamily="Noto Sans">Dw</text></> },
  { w: "w-[65px]", i: <><path d="M17 4h14v23H17z" fill="#fff" stroke="#3c58a8" /><circle cx="26" cy="10" r="3" fill="none" stroke="#3c58a8" strokeWidth="1.500" /><path d="M26 13v5h-7M22 15l-4 4 4 4" fill="none" stroke="#3c58a8" strokeWidth="1.500" /><path d="M0 4 19 0v32L0 28z" fill="#3450a4" /><path d="m5 10 4 11 4-11" fill="none" stroke="#fff" strokeWidth="2.500" /></> },
  { w: "w-[65px]", i: <><path d="M5 9h13l4 4v16H5z" fill="#f5f3ee" stroke="#777" /><path d="M8 14h9M8 17h11M8 20h11M8 23h11M8 26h9" stroke="#555" /><path d="M15 8c0-6 11-6 11 0 0 5-5 4-5 9" fill="none" stroke="#222" strokeWidth="6" /><path d="M15 8c0-6 11-6 11 0 0 5-5 4-5 9M21 20v4" fill="none" stroke="#f5e600" strokeWidth="4" /></> },
  { w: "w-[65px]", i: <><path d="M27 20a11 11 0 1 1 1-5H10" fill="none" stroke="#2f9fdf" strokeWidth="6" /><path d="M1 29C-4 24 16-2 29 2c2 1 1 4 0 6" fill="none" stroke="#f3b820" strokeWidth="2.800" /></> },
  { w: "w-[65px]", i: <><path d="M2 18C4 8 18 3 26 8c8 6 4 19-6 19-5 0-3-5-8-4-5 2-11 0-10-5z" fill="#bcdcee" stroke="#8eb4cc" /><circle cx="7" cy="17" r="2.500" fill="#df3e30" /><circle cx="13" cy="10" r="2.500" fill="#5aa83c" /><circle cx="21" cy="10" r="2.500" fill="#e7c22c" /><circle cx="23" cy="18" r="2.500" fill="#3b74c4" /><path d="m17 30 8-22 4-8 1 9-11 21" fill="#d99a3c" /></> },
];

function Taskbar() {
  return (
    <div className="relative flex h-[41px] shrink-0 bg-gradient-to-b from-[#be918a] to-[#b38880]">
      <div className="flex w-[509px] bg-gradient-to-b from-[#b98c87] to-[#b58680]">
        <svg className="ml-[12px] mt-[7px]" width="30" height="27" viewBox="0 0 30 27"><path d="M0 4 12 2.500V13H0zM13.500 2.300 29 0v13H13.500zM0 14.500h12V25L0 23.500zM13.500 14.500H29V27l-15.500-2z" fill="#fff" /></svg>
        <div className="ml-[12px] flex gap-[2px]">
          {SLOTS.map((s, k) => (
            <div key={k} className={"flex shrink-0 items-center justify-center " + s.w + (k ? " border border-y-0 border-[#cda9a3] bg-[#bd958e]" : "")}>
              <svg className="overflow-visible" width="32" height="32" viewBox="0 0 32 32">{s.i}</svg>
            </div>
          ))}
        </div>
      </div>
      <svg className="ml-[584px] shrink-0" width="252" height="41" viewBox="0 0 252 41">
        <path d="m1 24 4-4 4 4z" fill="#fff" stroke="#6a4a48" strokeWidth=".5" />
        <path d="M25 14h12v16H25z" fill="#222" /><path d="M27 15v14M35 15v14" stroke="#eee" strokeDasharray="2 1.500" /><path d="M29 16h4v5h-4zM29 23h4v6h-4z" fill="#e03030" />
        <path d="m53 13.500h7l5 5v7l-5 5h-7l-5-5v-7z" fill="#d01808" stroke="#e8dcd8" />
        <circle cx="78" cy="19" r="6" fill="#f5b82a" /><path d="M75 27c-1-5 6-5 7-2 1-6 9-3 8 1 1 5-14 5-15 1z" fill="#5aa7ea" />
        <path d="M95 6h24v35H95z" fill="#7c5f5f" opacity=".7" /><path d="M99 27c0-14 16-14 16 0z" fill="#222" stroke="#eee" /><path d="M103 25v-4M107 26v-6M111 25v-4" stroke="#fff" strokeWidth="1.500" />
        <g fill="none" stroke="#fff" strokeWidth="1.500"><path d="M126 14v4M130 14v4M124 18h8v4h-8zM128 22v7h5M134 15h6v14h-6z" /><path d="M154 18h12v8h-12zM160 26v4M156 30h9M150 14h5v4h-5zM152 18v9" /></g>
        <path d="M175 18h3l5-5v17l-5-5h-3z" fill="#fff" stroke="#6a4a48" strokeWidth=".5" />
        <path d="M206.500 13v17M200 17.500h13v6h-13z" fill="none" stroke="#fff" strokeWidth="1.800" />
        <rect x="235" y="15" width="14" height="14" fill="#e9682c" stroke="#fff" /><path d="M246 18.500h-6c-2 0-2 3 0 3h4c2 0 2 4 0 4h-6" fill="none" stroke="#fff" strokeWidth="2" />
      </svg>
      <div className="flex flex-1 flex-col">
        <div className="h-[16px] pr-[2px] text-center text-[12.700px] leading-[24px] text-white [text-shadow:0_0_2px_#5a3a38]">15:31</div>
        <div className="flex-1 bg-[#93291f] pl-[22px] text-[12.700px] leading-[27px] text-white">2015/6/1</div>
      </div>
      <div className="absolute left-[300px] top-0 h-[9px] w-[200px] overflow-hidden whitespace-nowrap text-[13.500px] leading-[12px] text-[#664048]"><b className="tracking-[1px]">Note:</b> 如果想查看某个表达式的</div>
    </div>
  );
}

function Player() {
  return (
    <>
      <div className="relative flex h-[6px] shrink-0 bg-[#555]">
        <div className="w-[1067px] bg-[#fb9104]" />
        <div className="-ml-[6px] -mt-[3px] h-[12px] w-[12px] shrink-0 rounded-full bg-white" />
      </div>
      <footer className="flex h-[40px] shrink-0 items-center bg-[#232323] text-[11px] text-[#bbb]">
        <div className="flex h-[40px] w-[39px] items-center border-r border-[#111] pl-[12px] pt-[3px]">
          <svg width="15" height="18" viewBox="0 0 15 18"><path d="M0 0v18l15-9z" fill="#a5a5a5" /></svg>
        </div>
        <div className="w-[1175px] pl-[9px] pt-[2px]">06:47<span className="text-[#777]">/09:08</span></div>
        <svg width="18" height="18" viewBox="0 0 18 18"><circle cx="9" cy="9" r="9" fill="#a3a3a3" /><path d="M12 4v10L5 9z" fill="#232323" /></svg>
        <div className="ml-[10px] flex h-[23px] w-[46px] items-center justify-center rounded-full bg-[#3b3b3b] text-[11.500px] text-[#bbb]">超清</div>
        <svg className="ml-[11px]" width="20" height="20" viewBox="0 0 20 20">
          <circle cx="10" cy="10" r="5.800" fill="none" stroke="#9a9a9a" strokeWidth="3" />
          <circle cx="10" cy="10" r="8" fill="none" stroke="#9a9a9a" strokeWidth="2.800" strokeDasharray="3 3.283" strokeDashoffset="1.500" />
        </svg>
        <svg className="ml-[11px]" width="16" height="16" viewBox="0 0 16 16" fill="none" stroke="#9a9a9a" strokeWidth="1.800"><path d="M6.500 1v5.500H1M9.500 1v5.500H15M6.500 15V9.500H1M9.500 15V9.500H15M1 1l5 5M15 1l-5 5M1 15l5-5M15 15l-5-5" /></svg>
        <svg className="ml-[14px]" width="22" height="21" viewBox="0 0 22 21">
          <path d="M3 1C.5 3 0 16 2 19.500c1 1 3 1 5 0V2C6 0 4 0 3 1z" fill="#f08a1c" />
          <path d="M4 .700C8 0 16 5 20 8c2 2 2 3 0 5l-5-2z" fill="#27a5e0" />
          <path d="M20 13c-4 3-11 8-15 7.300C3 20 3 18 4 16l11-5z" fill="#7ac52c" />
          <path d="M6 5.500 15 10.500 6 16z" fill="#fff" />
        </svg>
        <span className="ml-[1px] whitespace-nowrap text-[12.500px] font-bold text-[#c4c4c4]">腾讯视频</span>
      </footer>
    </>
  );
}

export default function App() {
  return (
    <div className={"relative flex h-[900px] w-[1440px] flex-col overflow-hidden bg-black " + SANS}>
      <TopBar />
      <TitleBar />
      <Ribbon />
      <div className="flex h-[591px] shrink-0 bg-gradient-to-b from-[#fcfdfc] via-[#f3f5f4] to-[#eaecea]">
        <NavPane />
        <Document />
        <StylesPane />
      </div>
      <StatusBar />
      <Taskbar />
      <Player />
      <Watermark />
    </div>
  );
}
